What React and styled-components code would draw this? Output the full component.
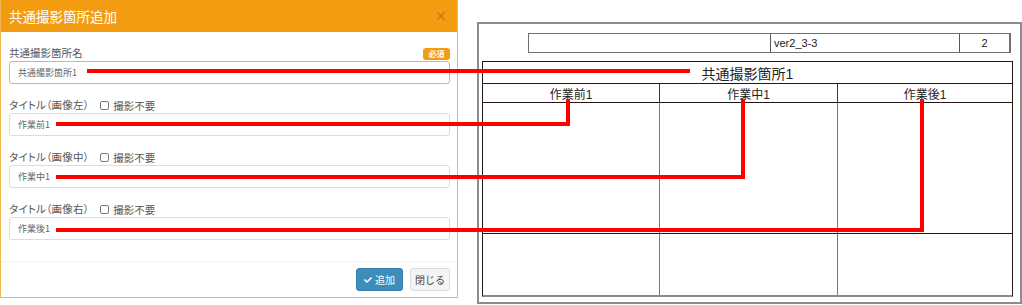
import React from 'react';
import styled, { createGlobalStyle } from 'styled-components';
import { FaCheck } from 'react-icons/fa';

const GlobalStyle = createGlobalStyle`
  html, body {
    margin: 0;
    padding: 0;
    background: #ffffff;
    overflow: hidden;
  }
  body {
    font-family: 'Noto Sans CJK JP', 'Noto Sans', sans-serif;
  }
`;

const Page = styled.div`
  position: relative;
  width: 1022px;
  height: 305px;
  display: flex;
  align-items: flex-start;
`;

/* ---------- modal ---------- */

const Modal = styled.div`
  width: 458px;
  box-sizing: border-box;
  border: 1px solid #f6b553;
  border-top: none;
  background: #ffffff;
  display: flex;
  flex-direction: column;
`;

const ModalHeader = styled.div`
  height: 32px;
  background: #f39c12;
  display: flex;
  align-items: center;
  justify-content: space-between;
  padding: 0 8px;
  color: #ffffff;
`;

const ModalTitle = styled.h4`
  margin: 0;
  font-size: 13.5px;
  font-weight: 400;
`;

const CloseButton = styled.span`
  font-family: 'DejaVu Sans', sans-serif;
  font-size: 15px;
  line-height: 1;
  color: rgba(0, 0, 0, 0.22);
  margin-right: 2px;
`;

const ModalBody = styled.div`
  padding: 14px 7px 21px 8px;
  display: flex;
  flex-direction: column;
  gap: 14px;
`;

const Group = styled.div`
  display: flex;
  flex-direction: column;
`;

const LabelRow = styled.div`
  height: 15px;
  display: flex;
  align-items: center;
  justify-content: ${props => (props.spread ? 'space-between' : 'flex-start')};
`;

const Label = styled.span`
  font-size: 10.5px;
  color: #555555;
  line-height: 1;
  font-feature-settings: ${props => (props.narrow ? '"palt"' : 'normal')};
  letter-spacing: ${props => (props.narrow ? '0.2px' : '0')};
`;

const Badge = styled.span`
  width: 27px;
  height: 12px;
  border-radius: 3px;
  background: #f39c12;
  color: #ffffff;
  font-size: 8px;
  font-weight: 700;
  display: flex;
  align-items: center;
  justify-content: center;
`;

const CheckLabel = styled.label`
  display: flex;
  align-items: center;
  gap: 4px;
  margin-left: 11px;
  font-size: 10.5px;
  color: #555555;
`;

const CheckBox = styled.span`
  width: 9px;
  height: 9px;
  box-sizing: border-box;
  border: 1px solid #7a7a7a;
  border-radius: 2px;
  background: #ffffff;
`;

const Input = styled.div`
  height: 23px;
  box-sizing: border-box;
  border: 1px solid ${props => (props.focused ? '#f3ab6c' : '#dcdce2')};
  border-radius: 3px;
  padding: 0 8px;
  display: flex;
  align-items: center;
  font-size: 9px;
  color: #666666;
`;

const ModalFooter = styled.div`
  border-top: 1px solid #f4f4f4;
  padding: 6px 7px 6px 0;
  display: flex;
  justify-content: flex-end;
  gap: 7px;
`;

const Button = styled.button`
  height: 23px;
  box-sizing: border-box;
  padding: 0;
  width: ${props => (props.primary ? '47px' : '40px')};
  border-radius: 3px;
  border: 1px solid ${props => (props.primary ? '#367fa9' : '#dddddd')};
  background: ${props => (props.primary ? '#3c8dbc' : '#f4f4f4')};
  color: ${props => (props.primary ? '#ffffff' : '#444444')};
  font-family: 'Noto Sans CJK JP', sans-serif;
  font-size: 10px;
  display: flex;
  align-items: center;
  justify-content: center;
  gap: 3px;

  svg {
    width: 8px;
    height: 8px;
  }
`;

/* ---------- sheet preview ---------- */

const Sheet = styled.div`
  margin: 22px 0 0 19px;
  width: 545px;
  height: 282px;
  box-sizing: border-box;
  border: 2px solid #8c8c8c;
  padding: 9px 7px 5px 3px;
  display: flex;
  flex-direction: column;
  gap: 8px;
  font-family: 'Liberation Sans', 'Noto Sans CJK JP', sans-serif;
  color: #222222;
`;

const InfoTable = styled.div`
  align-self: flex-end;
  margin-right: 2px;
  width: 483px;
  height: 20px;
  box-sizing: border-box;
  border: 1px solid #707070;
  border-right-width: 2px;
  display: grid;
  grid-template-columns: 241px 189px 1fr;
`;

const InfoCell = styled.div`
  border-left: ${props => (props.first ? 'none' : '1px solid #555555')};
  display: flex;
  align-items: center;
  justify-content: ${props => (props.center ? 'center' : 'flex-start')};
  padding-left: ${props => (props.center ? '0' : '3px')};
  font-size: 11px;
`;

const MainTable = styled.div`
  width: 531px;
  box-sizing: border-box;
  border-top: 1px solid #231815;
  border-left: 1px solid #231815;
  border-right: 1px solid #231815;
  border-bottom: 2px solid #8a8a8a;
  display: grid;
  grid-template-columns: 176px 178px 1fr;
  grid-template-rows: 22px 19px 131px 1fr;
  flex: 1;
`;

const TitleCell = styled.div`
  grid-column: 1 / 4;
  border-bottom: 1px solid #231815;
  display: flex;
  align-items: center;
  justify-content: center;
  font-size: 14px;
`;

const HeadCell = styled.div`
  border-bottom: 1px solid #231815;
  border-left: ${props => (props.first ? 'none' : '1px solid #3a3a3a')};
  display: flex;
  align-items: center;
  justify-content: center;
  font-size: 12px;
`;

const BodyCell = styled.div`
  border-left: ${props => (props.first ? 'none' : '1px solid #7a7a7a')};
  border-bottom: ${props => (props.last ? 'none' : '1px solid #231815')};
`;

/* ---------- red connector lines (overlay) ---------- */

const Connectors = styled.svg`
  position: absolute;
  left: 0;
  top: 0;
  width: 1022px;
  height: 305px;
  pointer-events: none;
`;

const fields = [
  { label: 'タイトル（画像左）', value: '作業前1' },
  { label: 'タイトル（画像中）', value: '作業中1' },
  { label: 'タイトル（画像右）', value: '作業後1' },
];

const lines = [
  '89,71 688,71',
  '58,124 568,124 568,101',
  '58,177 743,177 743,101',
  '58,230 922,230 922,101',
];

export default function App() {
  return (
    <>
      <GlobalStyle />
      <Page>
        <Modal>
          <ModalHeader>
            <ModalTitle>共通撮影箇所追加</ModalTitle>
            <CloseButton>×</CloseButton>
          </ModalHeader>
          <ModalBody>
            <Group>
              <LabelRow spread>
                <Label>共通撮影箇所名</Label>
                <Badge>必須</Badge>
              </LabelRow>
              <Input focused>共通撮影箇所1</Input>
            </Group>
            {fields.map(f => (
              <Group key={f.label}>
                <LabelRow>
                  <Label narrow>{f.label}</Label>
                  <CheckLabel>
                    <CheckBox />
                    撮影不要
                  </CheckLabel>
                </LabelRow>
                <Input>{f.value}</Input>
              </Group>
            ))}
          </ModalBody>
          <ModalFooter>
            <Button primary>
              <FaCheck />
              追加
            </Button>
            <Button>閉じる</Button>
          </ModalFooter>
        </Modal>

        <Sheet>
          <InfoTable>
            <InfoCell first />
            <InfoCell>ver2_3-3</InfoCell>
            <InfoCell center>2</InfoCell>
          </InfoTable>
          <MainTable>
            <TitleCell>共通撮影箇所1</TitleCell>
            <HeadCell first>作業前1</HeadCell>
            <HeadCell>作業中1</HeadCell>
            <HeadCell>作業後1</HeadCell>
            <BodyCell first />
            <BodyCell />
            <BodyCell />
            <BodyCell first last />
            <BodyCell last />
            <BodyCell last />
          </MainTable>
        </Sheet>

        <Connectors viewBox="0 0 1022 305">
          {lines.map(p => (
            <polyline
              key={p}
              points={p}
              fill="none"
              stroke="#ff0000"
              strokeWidth="4"
              strokeLinecap="square"
              strokeLinejoin="miter"
            />
          ))}
        </Connectors>
      </Page>
    </>
  );
}
